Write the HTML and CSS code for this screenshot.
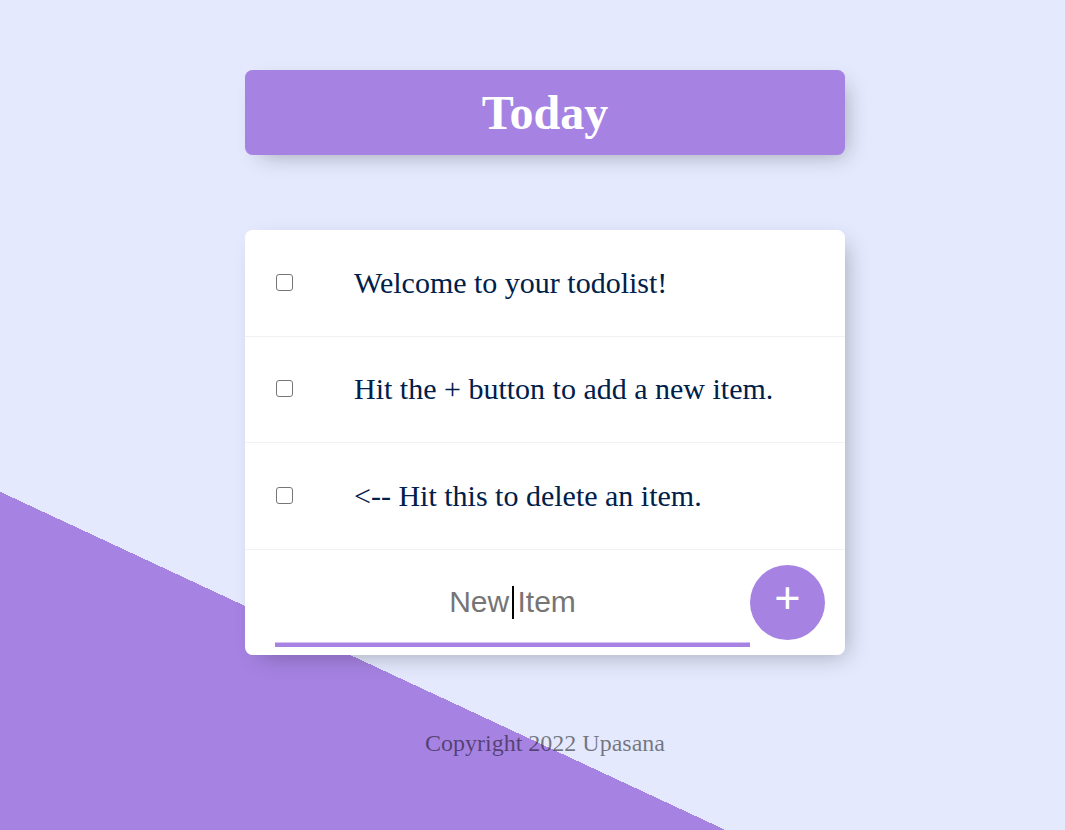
FILE: index.html
```html
<!DOCTYPE html>
<html lang="en">
<head>
<meta charset="utf-8">
<title>To-Do List</title>
<link rel="stylesheet" href="styles.css">
</head>
<body>
  <div class="heading">
    <h1>Today</h1>
  </div>
  <div class="card">
    <div class="item">
      <input type="checkbox" class="check">
      <p>Welcome to your todolist!</p>
    </div>
    <div class="item">
      <input type="checkbox" class="check">
      <p>Hit the + button to add a new item.</p>
    </div>
    <div class="item">
      <input type="checkbox" class="check">
      <p>&lt;-- Hit this to delete an item.</p>
    </div>
    <form class="item new-item" onsubmit="return false">
      <span class="input-wrap">
        <input type="text" class="new-input" name="newItem" placeholder="New Item" autocomplete="off">
        <span class="caret"></span>
      </span>
      <button type="button" class="add-btn">+</button>
    </form>
  </div>
  <footer class="footer">Copyright 2022 Upasana</footer>
</body>
</html>
```
FILE: styles.css
```css
html {
  background-color: #E4E9FD;
  background-image: linear-gradient(25deg, #A683E3 50%, #E4E9FD 50%);
  background-repeat: no-repeat;
  background-position: 0 0;
  background-size: 100% 1480px;
  min-height: 100%;
}

body {
  margin: 0;
  padding: 70px 0 0 25px;
  font-family: "Liberation Serif", "Times New Roman", serif;
}

.heading {
  width: 600px;
  margin: 0 auto;
  background-color: #A683E3;
  border-radius: 7.5px;
  box-shadow: 7.5px 7.5px 22.5px -7.5px rgba(0, 0, 0, 0.3);
  text-align: center;
}

.heading h1 {
  margin: 0;
  padding: 15px;
  font-size: 48px;
  line-height: 55px;
  font-weight: bold;
  color: #ffffff;
}

.card {
  width: 600px;
  margin: 75px auto 0;
  background-color: #ffffff;
  border-radius: 7.5px;
  box-shadow: 7.5px 7.5px 22.5px -7.5px rgba(0, 0, 0, 0.3);
}

.item {
  min-height: 105.5px;
  display: flex;
  align-items: center;
  border-bottom: 1px solid #F1F1F1;
  margin: 0;
}

.new-item {
  border-bottom: none;
}

.item p {
  margin: 0;
  padding: 30px;
  font-size: 30px;
  line-height: 34.5px;
  color: #00204a;
}

.check {
  -webkit-appearance: none;
  appearance: none;
  flex-shrink: 0;
  box-sizing: border-box;
  width: 17px;
  height: 17px;
  margin: 0 31px 1px 31px;
  border: 1.5px solid #767676;
  border-radius: 3px;
  background: #ffffff;
}

.input-wrap {
  position: relative;
  display: block;
  flex-shrink: 0;
  margin-left: 30px;
  height: 90px;
}

.new-input {
  display: block;
  box-sizing: border-box;
  width: 475px;
  height: 90px;
  margin: 0;
  padding: 0 3px;
  border: none;
  background: transparent;
  font-family: "Liberation Sans", Arial, sans-serif;
  font-size: 30px;
  color: #000000;
  text-align: center;
  outline: none;
  box-shadow: inset 0 -4.5px 0 0 #A683E3;
}

.new-input::placeholder {
  color: #757575;
  opacity: 1;
}

.caret {
  position: absolute;
  left: 237px;
  top: 29px;
  width: 2px;
  height: 33px;
  background: #000000;
}

.add-btn {
  flex-shrink: 0;
  box-sizing: border-box;
  width: 75px;
  height: 75px;
  padding: 0 0 9px 0;
  border: 0;
  border-radius: 50%;
  background-color: #A683E3;
  color: #ffffff;
  font-family: "Liberation Sans", Arial, sans-serif;
  font-size: 45px;
  line-height: 51px;
}

.footer {
  margin-top: 75px;
  text-align: center;
  font-size: 24px;
  line-height: 27.5px;
  color: rgba(0, 0, 0, 0.5);
}
```
